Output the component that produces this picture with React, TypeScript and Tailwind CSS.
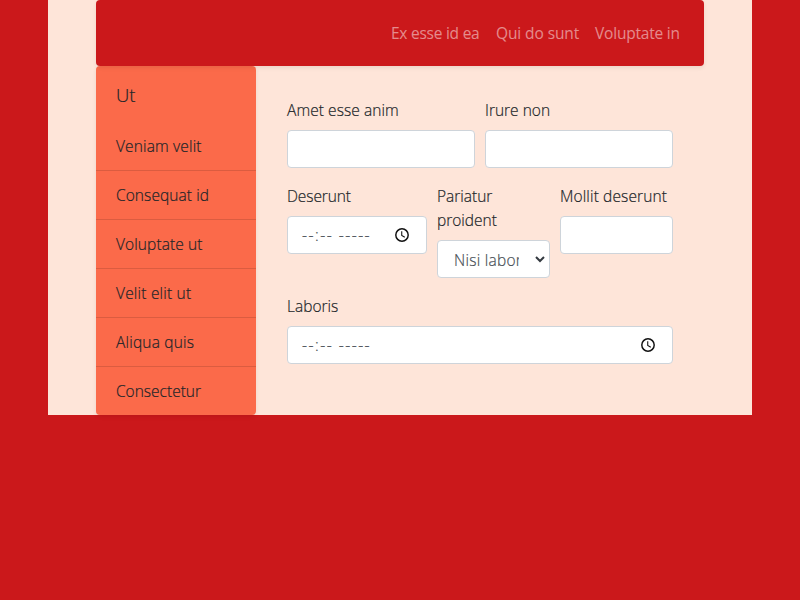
import React from "react";

const links = [
  { label: "Ex esse id ea", cls: "w-[89px] tracking-[-0.25px]" },
  { label: "Qui do sunt", cls: "w-[83px] tracking-[-0.1px]" },
  { label: "Voluptate in", cls: "w-[85px] tracking-[-0.2px]" },
];

const items = [
  { label: "Veniam velit", cls: "tracking-[0.15px]" },
  { label: "Consequat id", cls: "tracking-[0.08px]" },
  { label: "Voluptate ut", cls: "tracking-[0.1px]" },
  { label: "Velit elit ut", cls: "tracking-[0.2px]" },
  { label: "Aliqua quis", cls: "tracking-[0.2px]" },
  { label: "Consectetur", cls: "" },
];

const control =
  "flex h-[38px] w-full items-center rounded border border-[#ced4da] bg-white text-[#495057]";

function Clock() {
  return (
    <svg width="16" height="16" viewBox="0 0 24 24" fill="none" className="shrink-0">
      <circle cx="12" cy="12" r="9.3" stroke="#111" strokeWidth="2.2" />
      <path d="M11.6 6.5v6l4.6 2.8" stroke="#111" strokeWidth="1.6" />
    </svg>
  );
}

function Field({ label, className, children }: { label: React.ReactNode; className: string; children: React.ReactNode }) {
  return (
    <div className={className}>
      <label className="mb-2 block">{label}</label>
      {children}
    </div>
  );
}

function TimeBox() {
  return (
    <div className={`${control} justify-between pr-4 pl-[14px]`}>
      <span className="whitespace-pre tracking-[1.5px]">--:-- -----</span>
      <Clock />
    </div>
  );
}

export default function App() {
  return (
    <div className="h-[600px] w-[800px] overflow-hidden bg-[#cb181b] font-['Open_Sans',sans-serif] text-[15.5px] leading-6 font-light text-[#212529] [-webkit-text-stroke:0.2px]">
      <div className="mx-12 h-[415px] bg-[#fee5d9] px-12">
        <nav className="relative flex h-[66px] items-center justify-end gap-4 rounded bg-[#cb181b] pr-6 text-white/50 shadow-[0_2px_4px_rgba(0,0,0,0.075)] [-webkit-text-stroke:0px]">
          {links.map((l) => (
            <a key={l.label} className={`font-normal whitespace-nowrap ${l.cls}`}>{l.label}</a>
          ))}
        </nav>
        <div className="flex">
          <aside className="h-[349px] w-40 shrink-0 rounded bg-[#fb6a4a] shadow-[0_2px_4px_rgba(0,0,0,0.075)]">
            <h2 className="flex h-14 items-center px-5 pt-[2px] text-[18.5px]">Ut</h2>
            <ul>
              {items.map((t) => (
                <li key={t.label} className={`h-[49px] border-b border-black/[0.125] px-5 pt-3 last:h-12 last:border-b-0 ${t.cls}`}>{t.label}</li>
              ))}
            </ul>
          </aside>
          <form className="flex grow flex-col gap-4 pt-8 pr-[31px] pl-[31px]">
            <div className="flex gap-[10px]">
              <Field label="Amet esse anim" className="w-[188px] tracking-[0.07px]"><div className={control} /></Field>
              <Field label="Irure non" className="w-[188px]"><div className={control} /></Field>
            </div>
            <div className="flex gap-[10px]">
              <Field label="Deserunt" className="w-[140px] tracking-[-0.1px]"><TimeBox /></Field>
              <Field label={<>Pariatur<br />proident</>} className="w-[113px]">
                <div className={`${control} justify-between pr-1 pl-4`}>
                  <span className="w-[65px] overflow-hidden pt-px tracking-[0.25px] whitespace-nowrap">Nisi laboris</span>
                  <svg width="10" height="7" viewBox="0 0 10 7" fill="none">
                    <path d="M1 1l4 4 4-4" stroke="#343a40" strokeWidth="2" />
                  </svg>
                </div>
              </Field>
              <Field label="Mollit deserunt" className="w-[113px] tracking-[0.13px] whitespace-nowrap"><div className={control} /></Field>
            </div>
            <Field label="Laboris" className="w-full"><TimeBox /></Field>
          </form>
        </div>
      </div>
    </div>
  );
}
